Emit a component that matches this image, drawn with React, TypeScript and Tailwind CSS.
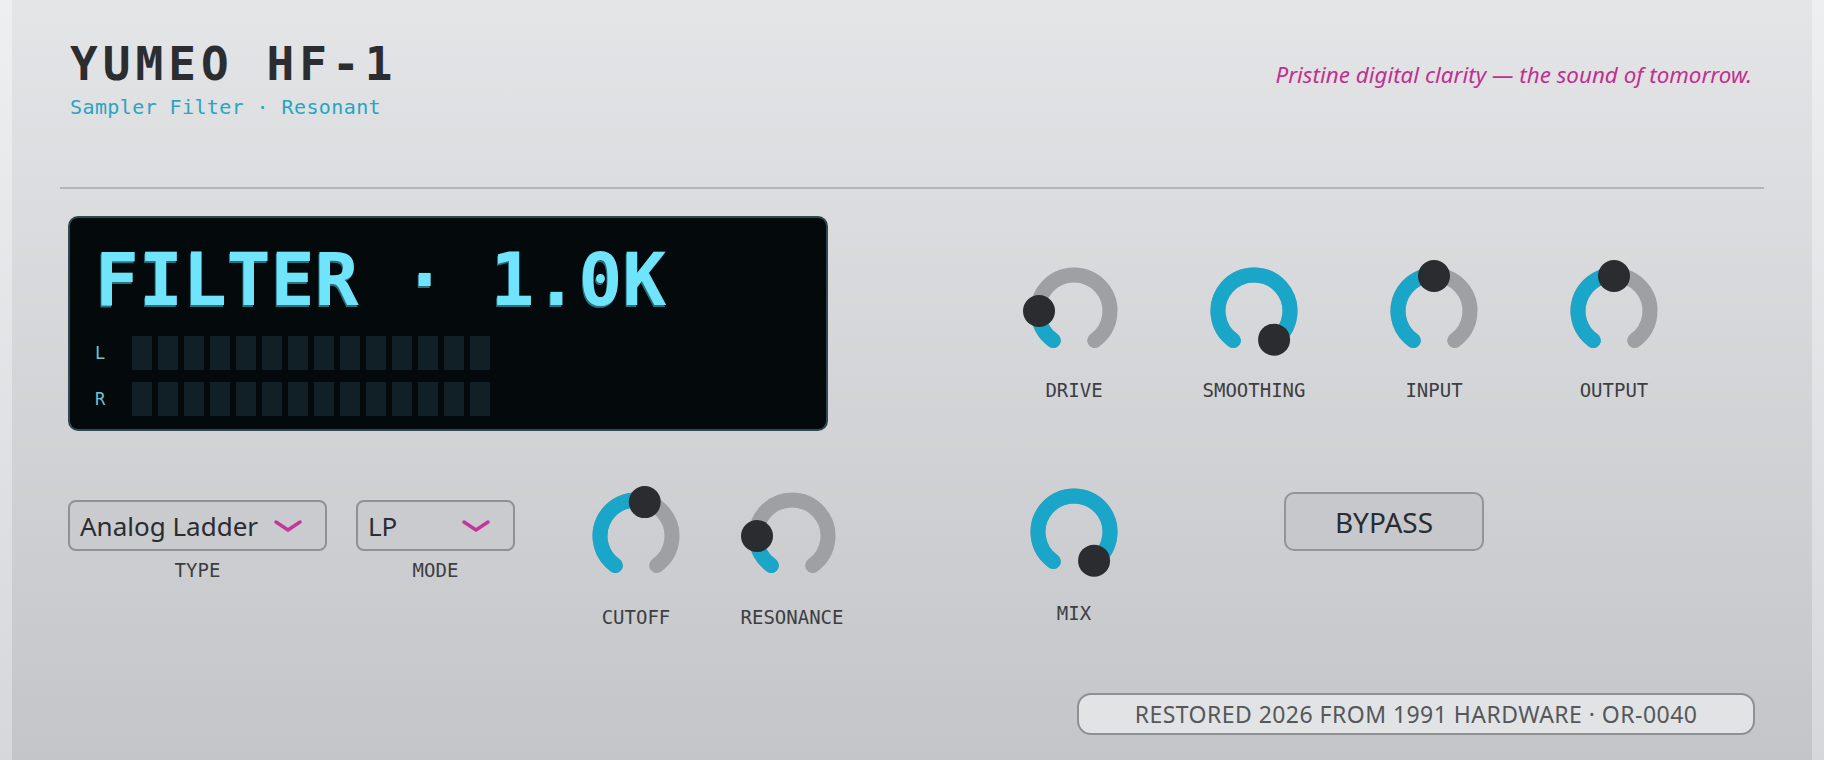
const MONO = "font-['DejaVu_Sans_Mono',monospace]";
const SANS = "font-['Noto_Sans','Open_Sans',sans-serif]";

const START = -145;
const END = 145;

function polar(cx: number, cy: number, r: number, deg: number) {
  const a = (deg * Math.PI) / 180;
  return [cx + r * Math.sin(a), cy - r * Math.cos(a)];
}

function arcPath(cx: number, cy: number, r: number, from: number, to: number) {
  const [x0, y0] = polar(cx, cy, r, from);
  const [x1, y1] = polar(cx, cy, r, to);
  const large = to - from > 180 ? 1 : 0;
  return `M ${x0} ${y0} A ${r} ${r} 0 ${large} 1 ${x1} ${y1}`;
}

function Knob({ label, value, gap = "mt-[15px]" }: { label: string; value: number; gap?: string }) {
  const angle = START + (END - START) * value;
  const [dx, dy] = polar(55, 55, 35, angle);
  return (
    <div className="flex w-[120px] flex-col items-center">
      <svg width="110" height="110" viewBox="0 0 110 110" className="overflow-visible">
        <path d={arcPath(55, 55, 36, START, END)} fill="none" stroke="#9fa0a4" strokeWidth="15" strokeLinecap="round" />
        {value > 0 && (
          <path d={arcPath(55, 55, 36, START, angle)} fill="none" stroke="#19a6c9" strokeWidth="15" strokeLinecap="round" />
        )}
        <circle cx={dx} cy={dy} r="16" fill="#2a2c30" />
      </svg>
      <span className={`${gap} ${MONO} text-[19px] leading-[18px] text-[#3c3e42]`}>{label}</span>
    </div>
  );
}

function Chevron() {
  return (
    <svg width="30" height="14" viewBox="0 0 30 14">
      <polyline points="3,3 15,11 27,3" fill="none" stroke="#c3379a" strokeWidth="3.5" strokeLinecap="round" strokeLinejoin="round" />
    </svg>
  );
}

function Select({ value, label, width }: { value: string; label: string; width: string }) {
  return (
    <div className={`flex ${width} flex-col items-center`}>
      <div className="flex h-[51px] w-full items-center justify-between rounded-lg border-2 border-[#8f9195] bg-[#c9cbcf] pl-[10px] pr-[22px]">
        <span className={`${SANS} text-[26px] leading-none text-[#2a2c30]`}>{value}</span>
        <Chevron />
      </div>
      <span className={`mt-[10px] ${MONO} text-[19px] leading-[18px] text-[#3c3e42]`}>{label}</span>
    </div>
  );
}

function Meter({ ch }: { ch: string }) {
  return (
    <div className="flex h-[34px] items-center">
      <span className={`w-[37px] ${MONO} text-[17px] leading-none text-[#6fc3d4]`}>{ch}</span>
      <div className="flex h-full gap-[6px]">
        {Array.from({ length: 14 }).map((_, i) => (
          <div key={i} className="h-full w-[20px] bg-[#112026]" />
        ))}
      </div>
    </div>
  );
}

export default function App() {
  return (
    <div className="h-[760px] w-full overflow-hidden bg-gradient-to-b from-[#eeeff0] to-[#d6d7d9] px-3">
      <div className="h-full bg-gradient-to-b from-[#e4e5e7] to-[#c3c5c8] px-12">
        <header className="flex items-start justify-between pl-[10px] pr-[12px] pt-[41px]">
          <div>
            <h1 className={`${MONO} text-[46px] font-bold leading-none tracking-[0.11em] text-[#2b2d31]`}>YUMEO HF-1</h1>
            <p className={`mt-[10px] ${MONO} text-[20px] leading-none tracking-[0.02em] text-[#27a5c4]`}>
              Sampler Filter · Resonant
            </p>
          </div>
          <p className={`mt-[23px] ${SANS} text-[22.4px] italic leading-none text-[#c0308f]`}>
            Pristine digital clarity — the sound of tomorrow.
          </p>
        </header>

        <div className="mt-[70px] h-[2px] bg-[#b3b5b8]" />

        <div className="mt-[27px] flex items-start">
          <div className="ml-2 w-[760px] rounded-[10px] border-2 border-[#30484f] bg-[#04090b] pb-[13px] pl-[25px] pt-[25px]">
            <div className={`${MONO} text-[73px] font-bold leading-none text-[#70e4fb] [text-shadow:-1px_2px_0_#2a6f7e]`}>
              FILTER · 1.0K
            </div>
            <div className="mt-[20px] flex flex-col gap-[12px]">
              <Meter ch="L" />
              <Meter ch="R" />
            </div>
          </div>
          <div className="ml-[186px] mt-[40px] flex gap-[60px]">
            <Knob label="DRIVE" value={0.19} />
            <Knob label="SMOOTHING" value={1} />
            <Knob label="INPUT" value={0.5} />
            <Knob label="OUTPUT" value={0.5} />
          </div>
        </div>

        <div className="mt-[46px] flex items-start">
          <div className="ml-2 mt-[23px]">
            <Select value="Analog Ladder" label="TYPE" width="w-[259px]" />
          </div>
          <div className="ml-[29px] mt-[23px]">
            <Select value="LP" label="MODE" width="w-[159px]" />
          </div>
          <div className="ml-[61px] mt-1">
            <Knob label="CUTOFF" value={0.55} gap="mt-[17px]" />
          </div>
          <div className="ml-[36px] mt-1">
            <Knob label="RESONANCE" value={0.19} gap="mt-[17px]" />
          </div>
          <div className="ml-[162px]">
            <Knob label="MIX" value={1} gap="mt-[17px]" />
          </div>
          <button
            className={`ml-[150px] mt-[15px] flex h-[59px] w-[200px] items-center justify-center rounded-[10px] border-2 border-[#929497] bg-[#c6c8cb] ${SANS} text-[28px] leading-none text-[#2a2c30]`}
          >
            BYPASS
          </button>
        </div>

        <div className="mt-[67px] flex justify-end pr-[9px]">
          <div
            className={`flex h-[42px] w-[678px] items-center justify-center rounded-[14px] border-2 border-[#8e9094] bg-[#e1e3e5] ${SANS} text-[23px] leading-none tracking-[0.02em] text-[#55575b]`}
          >
            RESTORED 2026 FROM 1991 HARDWARE · OR-0040
          </div>
        </div>
      </div>
    </div>
  );
}
